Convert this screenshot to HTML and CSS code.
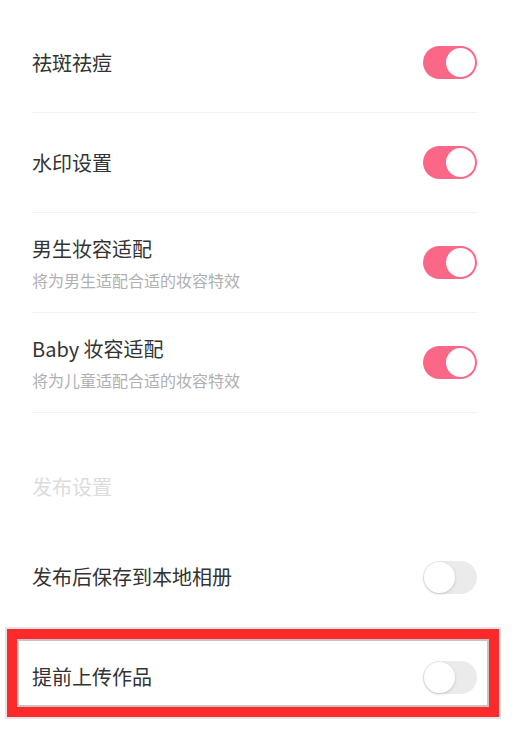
FILE: index.html
```html
<!DOCTYPE html>
<html>
  <head>
    <title>设置</title>
    <link rel="stylesheet" href="styles.css">
  </head>
  <body>
    <div class="page">
      <div class="row">
        <div class="label">
          <div class="title">祛斑祛痘</div>
        </div>
        <span class="switch on"></span>
      </div>
      <div class="row">
        <div class="label">
          <div class="title">水印设置</div>
        </div>
        <span class="switch on"></span>
      </div>
      <div class="row">
        <div class="label">
          <div class="title">男生妆容适配</div>
          <div class="sub">将为男生适配合适的妆容特效</div>
        </div>
        <span class="switch on"></span>
      </div>
      <div class="row">
        <div class="label">
          <div class="title">Baby 妆容适配</div>
          <div class="sub">将为儿童适配合适的妆容特效</div>
        </div>
        <span class="switch on"></span>
      </div>

      <div class="section">发布设置</div>

      <div class="row plain">
        <div class="label">
          <div class="title">发布后保存到本地相册</div>
        </div>
        <span class="switch"></span>
      </div>
      <div class="row plain">
        <div class="label">
          <div class="title">提前上传作品</div>
        </div>
        <span class="switch"></span>
      </div>

      <!-- highlight frame drawn over the last row -->
      <div class="mark"></div>
    </div>
  </body>
</html>
```

FILE: styles.css
```css
body {
  margin: 0;
  background: #fff;
  font-family: "Noto Sans CJK SC", "Noto Sans", sans-serif;
  color: #333;
}
.page {
  position: relative;
  padding: 13px 42px 0 32px;
  height: 740px;
  box-sizing: border-box;
  overflow: hidden;
}
.row {
  height: 100px;
  box-sizing: border-box;
  border-bottom: 1px solid #f2f2f2;
  display: flex;
  align-items: center;
  justify-content: space-between;
}
.row.plain {
  border-bottom: none;
}
.title {
  font-size: 20px;
  line-height: 28px;
}
.sub {
  font-size: 16px;
  line-height: 22px;
  color: #b0b0b0;
  margin-top: 6px;
}
.section {
  height: 114px;
  box-sizing: border-box;
  padding-top: 60px;
  font-size: 20px;
  line-height: 28px;
  color: #dcdcdc;
}
.switch {
  position: relative;
  width: 54px;
  height: 33px;
  border-radius: 17px;
  background: #ebebeb;
  flex-shrink: 0;
}
.switch::after {
  content: "";
  position: absolute;
  left: 1px;
  top: 1px;
  width: 31px;
  height: 31px;
  border-radius: 50%;
  background: #fff;
  box-shadow: 0 1px 3px rgba(0, 0, 0, 0.18);
}
.switch.on {
  background: #fb6786;
}
.switch.on::after {
  left: auto;
  right: 2px;
  top: 2px;
  width: 29px;
  height: 29px;
  box-shadow: none;
}
.mark {
  position: absolute;
  left: 7px;
  top: 629px;
  width: 492px;
  height: 88px;
  box-sizing: border-box;
  border: 10px solid #fc2a2b;
  box-shadow: 0 0 0 2px #e4e4e4, inset 0 0 0 2px #c4c4c4;
}
```
